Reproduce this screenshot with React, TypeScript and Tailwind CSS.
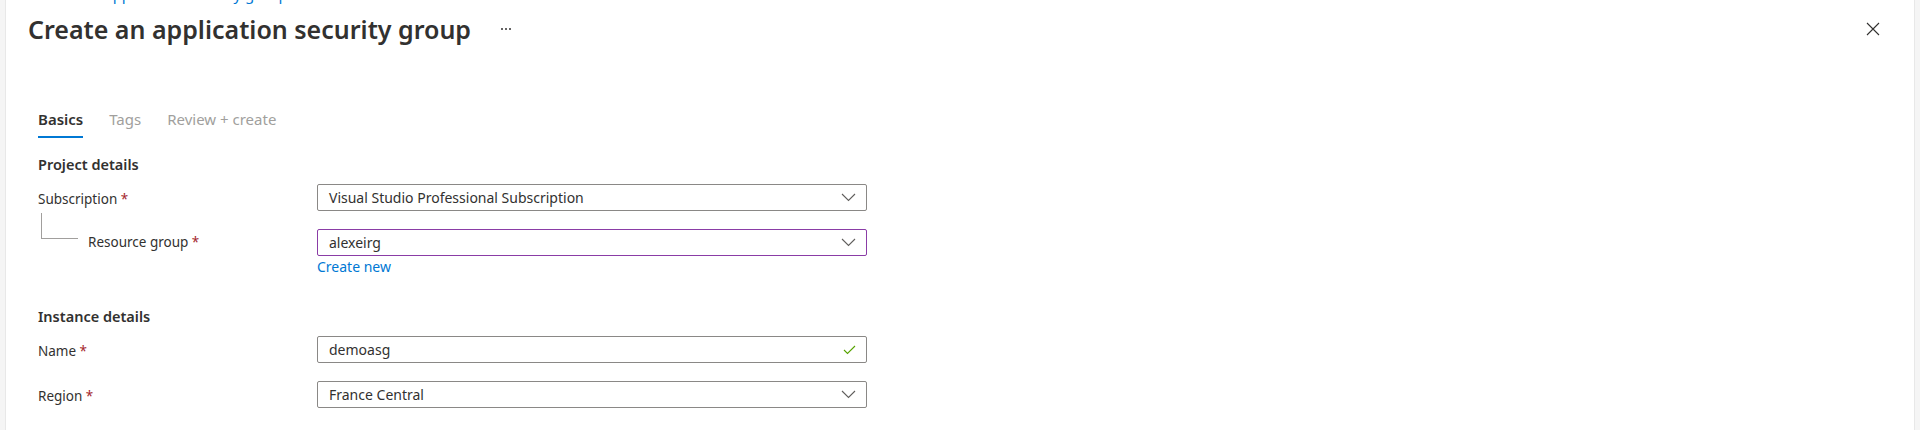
const font = { fontFamily: '"Segoe UI", "Noto Sans", sans-serif' };

function Label({ text }: { text: string }) {
    return (
        <span className="text-[13.5px] text-[#323130]">
            {text} <span className="text-[#a4262c]">*</span>
        </span>
    );
}

function Chevron() {
    return (
        <svg width="15" height="9" viewBox="0 0 15 9" className="text-[#605e5c]">
            <path d="M1 1 L7.5 7.5 L14 1" fill="none" stroke="currentColor" strokeWidth="1.1" />
        </svg>
    );
}

function CheckMark() {
    return (
        <svg width="13" height="10" viewBox="0 0 13 10" className="text-[#57a300]">
            <path d="M1 5 L4.5 8.5 L12 1" fill="none" stroke="currentColor" strokeWidth="1.1" />
        </svg>
    );
}

function Field({ value, dirty, valid }: { value: string; dirty?: boolean; valid?: boolean }) {
    return (
        <div
            className={`w-[550px] h-[27px] flex items-center justify-between pl-[11px] pr-[10px] border rounded-[2px] bg-white ${
                dirty ? 'border-[#8a3ca6]' : 'border-[#8a8886]'
            }`}
        >
            <span className="text-[14px] text-[#323130] leading-none">{value}</span>
            {valid ? <CheckMark /> : <Chevron />}
        </div>
    );
}

export default function App() {
    return (
        <div className="w-full h-[430px] flex overflow-hidden bg-white" style={font}>
            {/* left edge */}
            <div className="w-[6px] shrink-0 bg-[#f5f5f5] border-r border-[#e8e8e8]" />

            <div className="flex-1 flex flex-col min-w-0">
                {/* breadcrumb, mostly scrolled out of view */}
                <div className="h-[4px] overflow-hidden">
                    <div className="-mt-[16px] pl-[38px] text-[15px] leading-[20px] text-[#0078d4]">
                        Home &gt; Application security groups &gt;
                    </div>
                </div>

                {/* Header */}
                <div className="flex items-center h-[44px] mt-[3px] pl-[22px] pr-[34px]">
                    <h1 className="text-[25px] font-semibold text-[#323130] leading-[36px]">
                        Create an application security group
                    </h1>
                    <button className="ml-[30px] flex items-center gap-[2px] text-[#323130]" aria-label="More">
                        <span className="w-[2px] h-[2px] bg-current rounded-full" />
                        <span className="w-[2px] h-[2px] bg-current rounded-full" />
                        <span className="w-[2px] h-[2px] bg-current rounded-full" />
                    </button>
                    <div className="flex-1" />
                    <svg width="14" height="14" viewBox="0 0 14 14" className="text-[#323130]" aria-label="Close">
                        <path d="M1 1 L13 13 M13 1 L1 13" fill="none" stroke="currentColor" strokeWidth="1.1" />
                    </svg>
                </div>

                <div className="pl-[32px]">
                    {/* Tabs */}
                    <div className="flex gap-[26px] mt-[58px]">
                        <div className="flex flex-col">
                            <span className="text-[15px] leading-[20px] font-semibold text-[#323130]">Basics</span>
                            <span className="mt-[7px] h-[2px] bg-[#0078d4]" />
                        </div>
                        <span className="text-[15px] leading-[20px] text-[#a19f9d]">Tags</span>
                        <span className="text-[15px] leading-[20px] text-[#a19f9d]">Review + create</span>
                    </div>

                    {/* Project details */}
                    <h2 className="mt-[16px] text-[14.5px] leading-[20px] font-semibold text-[#323130]">Project details</h2>

                    <div className="mt-[10px] flex items-center">
                        <div className="w-[279px]">
                            <Label text="Subscription" />
                        </div>
                        <Field value="Visual Studio Professional Subscription" />
                    </div>

                    <div className="mt-[18px] flex items-start">
                        <div className="w-[279px] flex items-start">
                            <div className="ml-[3px] -mt-[16px] w-[37px] h-[26px] border-l border-b border-[#a19f9d]" />
                            <div className="ml-[10px] h-[27px] flex items-center">
                                <Label text="Resource group" />
                            </div>
                        </div>
                        <div className="flex flex-col">
                            <Field value="alexeirg" dirty />
                            <a className="mt-[1px] text-[14px] leading-[20px] text-[#0078d4]" href="#">
                                Create new
                            </a>
                        </div>
                    </div>

                    {/* Instance details */}
                    <h2 className="mt-[29px] text-[14.5px] leading-[20px] font-semibold text-[#323130]">Instance details</h2>

                    <div className="mt-[10px] flex items-center">
                        <div className="w-[279px]">
                            <Label text="Name" />
                        </div>
                        <Field value="demoasg" valid />
                    </div>

                    <div className="mt-[18px] flex items-center">
                        <div className="w-[279px]">
                            <Label text="Region" />
                        </div>
                        <Field value="France Central" />
                    </div>
                </div>
            </div>

            {/* right edge */}
            <div className="w-[6px] shrink-0 bg-[#f5f5f5] border-l border-[#e8e8e8]" />
        </div>
    );
}
